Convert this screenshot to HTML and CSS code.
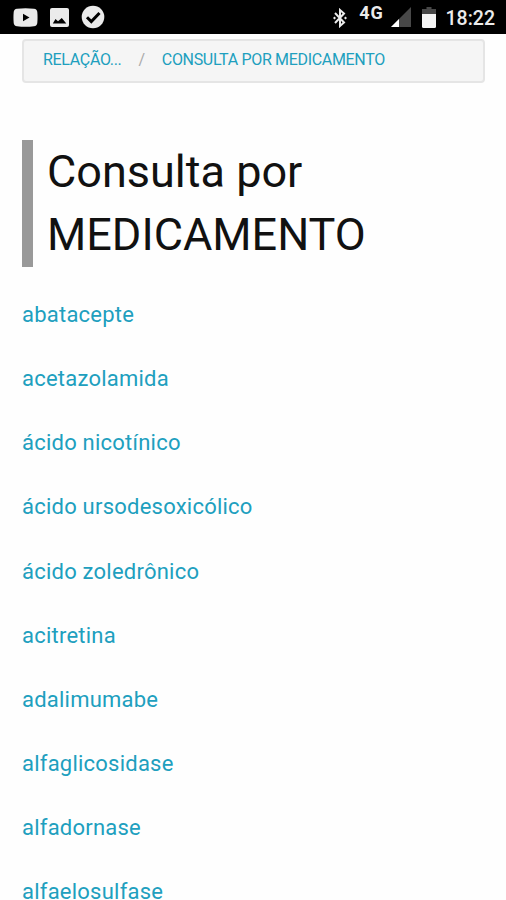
FILE: index.html
```html
<!DOCTYPE html>
<html lang="pt-br">
<head>
    <meta charset="utf-8">
    <meta name="viewport" content="width=device-width,initial-scale=1">
    <title>Consulta por MEDICAMENTO</title>
    <link rel="stylesheet" href="styles.css">
</head>
<body>
    <div class="statusbar">
        <div class="notifications">
            <svg width="25" height="19" viewBox="0 0 25 19">
                <path fill="#ebebeb" d="M4 .7Q12.500-.3 21 .7 24 1 24.300 4q.5 5.500 0 11-.3 3-3.300 3.300-8.500 1-17 0Q1 18 .7 15q-.5-5.500 0-11Q1 1 4 .7z"/>
                <path fill="#000" d="M10 5.800v7.400l6.500-3.700z"/>
            </svg>
            <svg width="19" height="19" viewBox="0 0 19 19">
                <rect width="19" height="19" rx="2" fill="#ebebeb"/>
                <path fill="#000" d="M2.800 15.500l2.700-4.500 2.500 2.300 3.800-3.300 4.500 5.500z"/>
            </svg>
            <svg width="24" height="24" viewBox="0 0 24 24">
                <circle cx="12" cy="12" r="11.300" fill="#ebebeb"/>
                <path fill="none" stroke="#000" stroke-width="3" d="M6 12.200l4.300 4.300L18.500 8"/>
            </svg>
        </div>
        <div class="system">
            <svg class="bluetooth" width="14" height="20" viewBox="0 0 14 20">
                <path fill="none" stroke="#ebebeb" stroke-width="2" d="M2 5l9 9.500L7 18V2l4 3.500L2 15"/>
                <path fill="#ebebeb" d="M0 10l1.500-1.500L3 10l-1.500 1.500zM11 10l1.500-1.500L14 10l-1.500 1.500z"/>
            </svg>
            <span class="network">4G</span>
            <svg class="signal" width="20" height="20" viewBox="0 0 20 20">
                <path fill="#484848" d="M20 0v20H0z"/>
                <path fill="#fff" d="M8 12v8H0z"/>
            </svg>
            <svg class="battery" width="14" height="21" viewBox="0 0 14 21">
                <path fill="#484848" d="M4.500 0h5v2H14v6H0V2h4.500z"/>
                <path fill="#f5f5f5" d="M0 7h14v12.500q0 1.500-1.500 1.500h-11Q0 21 0 19.500z"/>
            </svg>
            <span class="clock">18:22</span>
        </div>
    </div>
    <div class="content">
        <ul class="breadcrumbs">
            <li><a>Relação...</a></li>
            <li><a>Consulta por medicamento</a></li>
        </ul>
        <h1 class="title">Consulta por <br>MEDICAMENTO</h1>
        <ul class="drugs">
            <li><a>abatacepte</a></li>
            <li><a>acetazolamida</a></li>
            <li><a>ácido nicotínico</a></li>
            <li><a>ácido ursodesoxicólico</a></li>
            <li><a>ácido zoledrônico</a></li>
            <li><a>acitretina</a></li>
            <li><a>adalimumabe</a></li>
            <li><a>alfaglicosidase</a></li>
            <li><a>alfadornase</a></li>
            <li><a>alfaelosulfase</a></li>
        </ul>
    </div>
</body>
</html>
```

FILE: styles.css
```css
* {
    box-sizing: border-box;
}

body {
    margin: 0;
    height: 900px;
    overflow: hidden;
    background: #fefefe;
    font-family: Roboto, sans-serif;
}

ul {
    margin: 0;
    padding: 0;
    list-style: none;
}

a {
    color: #209fbe;
    cursor: pointer;
}

.statusbar {
    display: flex;
    justify-content: space-between;
    height: 34px;
    padding: 0 11px 0 13px;
    background: #000;
    color: #ebebeb;
}

.notifications {
    display: flex;
    align-items: center;
    gap: 12px;
}

.system {
    display: flex;
    align-items: flex-start;
}

.bluetooth {
    margin-top: 8px;
}

.network {
    margin: 4px 7px 0 12px;
    font-size: 18px;
    font-weight: 700;
    line-height: 18px;
    letter-spacing: 0.8px;
}

.signal {
    margin-top: 7px;
}

.battery {
    margin: 7px 10px 0 11px;
}

.clock {
    font-size: 19.5px;
    font-weight: 500;
    line-height: 37px;
}

.content {
    padding: 5px 21px 0 22px;
}

.breadcrumbs {
    display: flex;
    height: 44px;
    padding: 0 19px;
    border: 2px solid #e5e5e5;
    border-radius: 4px;
    background: #f5f5f5;
    font-size: 16px;
    line-height: 38px;
    letter-spacing: -0.32px;
    text-transform: uppercase;
}

.breadcrumbs li + li:before {
    content: "/";
    margin: 0 17px;
    color: #aaa;
}

.title {
    margin: 57px 0 0;
    padding: 0 0 1px 14px;
    border-left: 11px solid #999;
    color: #111;
    font-size: 45px;
    font-weight: 400;
    line-height: 63px;
}

.drugs {
    padding-top: 16px;
    font-size: 22px;
    line-height: 64.15px;
    letter-spacing: 0.23px;
}
```
